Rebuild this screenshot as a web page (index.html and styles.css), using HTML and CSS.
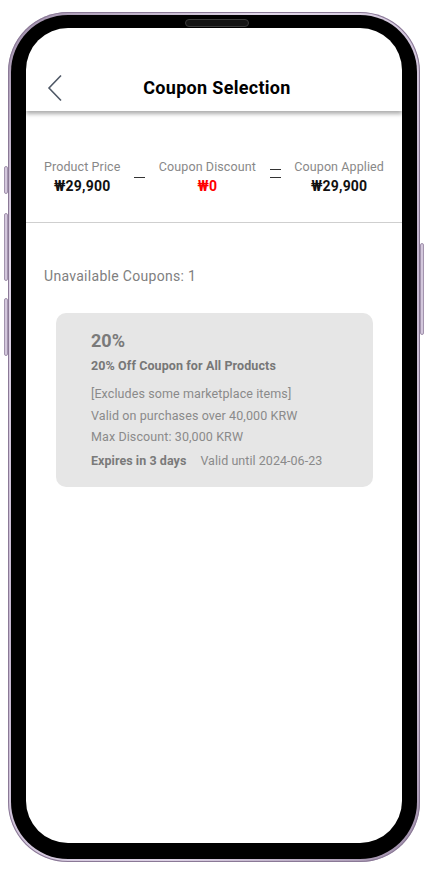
FILE: index.html
```html
<!DOCTYPE html>
<html lang="en">
<head>
<meta charset="utf-8">
<title>Coupon Selection</title>
<link rel="stylesheet" href="styles.css">
</head>
<body>
<div class="phone">
  <span class="btn btn-mute"></span>
  <span class="btn btn-vol-up"></span>
  <span class="btn btn-vol-down"></span>
  <span class="btn btn-power"></span>
  <div class="bezel">
    <span class="speaker"></span>
    <div class="screen">
      <header class="topbar">
        <div class="back">
          <svg width="16" height="28" viewBox="0 0 16 28"><path d="M14 1.5 L2 14 L14 26.5" fill="none" stroke="#4f5866" stroke-width="1.6"/></svg>
        </div>
        <h1 class="title">Coupon Selection</h1>
        <div></div>
      </header>
      <section class="summary">
        <div class="col">
          <div class="label">Product Price</div>
          <div class="value">₩29,900</div>
        </div>
        <div class="sign minus"><span></span></div>
        <div class="col">
          <div class="label">Coupon Discount</div>
          <div class="value red">₩0</div>
        </div>
        <div class="sign equal"><span></span><span></span></div>
        <div class="col">
          <div class="label">Coupon Applied</div>
          <div class="value">₩29,900</div>
        </div>
      </section>
      <section class="list">
        <p class="count">Unavailable Coupons: 1</p>
        <div class="card">
          <div class="pct">20%</div>
          <div class="name">20% Off Coupon for All Products</div>
          <div class="details">
            <p>[Excludes some marketplace items]</p>
            <p>Valid on purchases over 40,000 KRW</p>
            <p>Max Discount: 30,000 KRW</p>
          </div>
          <div class="foot"><strong>Expires in 3 days</strong><span>Valid until 2024-06-23</span></div>
        </div>
      </section>
    </div>
  </div>
</div>
</body>
</html>
```
FILE: styles.css
```css
* { box-sizing: border-box; }
html, body { margin: 0; padding: 0; background: #fff; }
body { font-family: Roboto, "Noto Sans", "Liberation Sans", sans-serif; }

.phone {
  position: relative;
  margin: 12px 0 0 8px;
  width: 412px;
  height: 850px;
  border-radius: 60px;
  padding: 3px;
  background: linear-gradient(135deg, #9d8ca8 0%, #e0d6e8 20%, #c4b6cf 50%, #ddd2e5 80%, #9d8ca8 100%);
  box-shadow: inset 0 0 0 1px #8a7996;
}
.btn {
  position: absolute;
  width: 4px;
  background: #d3c7dc;
  border: 1px solid #a293ad;
  border-radius: 2px;
}
.btn-mute { left: -4px; top: 154px; height: 28px; }
.btn-vol-up { left: -4px; top: 201px; height: 68px; }
.btn-vol-down { left: -4px; top: 286px; height: 58px; }
.btn-power { right: -4px; top: 231px; height: 92px; }

.bezel {
  position: relative;
  height: 100%;
  border-radius: 57px;
  background: #000;
  padding: 13px 15px 16px 15px;
}
.speaker {
  position: absolute;
  left: 174px;
  top: 4px;
  width: 64px;
  height: 8px;
  border-radius: 4px;
  background: #141414;
  border: 1px solid #3a3a3a;
}
.screen {
  height: 100%;
  border-radius: 42px;
  background: #fff;
  overflow: hidden;
}

.topbar {
  display: grid;
  grid-template-columns: 1fr auto 1fr;
  align-items: center;
  height: 83px;
  padding-top: 36px;
  box-shadow: 0 3px 4px rgba(0,0,0,0.32);
  position: relative;
}
.back { padding-left: 21px; display: flex; align-items: center; }
.back svg { display: block; }
.title {
  margin: 0;
  padding-left: 6px;
  font-size: 18px;
  font-weight: 700;
  color: #000;
  line-height: 24px;
  letter-spacing: 0.3px;
}

.summary {
  display: flex;
  justify-content: space-between;
  align-items: flex-start;
  height: 112px;
  padding: 47px 18px 0;
  border-bottom: 1px solid #cfcfcf;
}
.col { text-align: center; }
.label { font-size: 12.5px; line-height: 18px; color: #888; letter-spacing: 0.1px; }
.value { font-size: 14px; line-height: 20px; font-weight: 700; color: #111; letter-spacing: 0.2px; }
.value.red { color: #f00; }
.sign { width: 11px; display: flex; flex-direction: column; gap: 7px; }
.sign span { display: block; height: 1px; background: #333; }
.minus { padding-top: 19px; }
.equal { padding-top: 11px; }

.list { padding: 0 18px; }
.count {
  margin: 43px 0 0;
  font-size: 14px;
  line-height: 20px;
  color: #808080;
  letter-spacing: 0.3px;
}
.card {
  margin: 27px 11px 0 12px;
  height: 174px;
  border-radius: 10px;
  background: #e6e6e6;
  padding: 17px 20px 0 35px;
  color: #888;
}
.pct { font-size: 18px; font-weight: 700; line-height: 22px; color: #7a7a7a; }
.name { margin-top: 3px; font-size: 12.5px; font-weight: 700; line-height: 22px; color: #777; letter-spacing: 0.1px; }
.details { margin-top: 6px; }
.details p { margin: 0; font-size: 12.5px; line-height: 21.5px; color: #8a8a8a; letter-spacing: 0.1px; }
.foot { margin-top: 2px; display: flex; gap: 14px; font-size: 12.5px; line-height: 22px; color: #8a8a8a; letter-spacing: 0.05px; }
.foot strong { color: #7a7a7a; }
```
